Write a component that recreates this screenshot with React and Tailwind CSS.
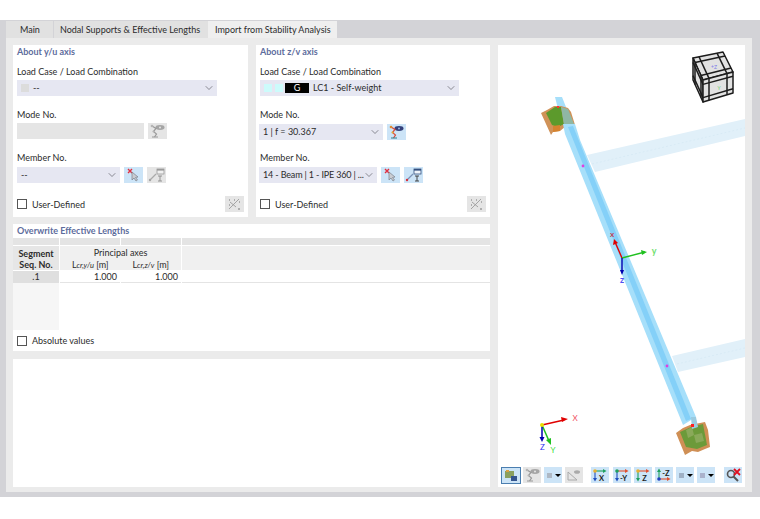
import { ChevronDown } from "lucide-react";

const font = { fontFamily: 'Lato, "Noto Sans", sans-serif' };

function Select({ className, children }) {
  return (
    <div className={`h-4 bg-[#e6e7f2] flex items-center justify-between pl-[4px] pr-[2px] text-[#2b2b2b] ${className}`}>
      <div className="flex items-center min-w-0 whitespace-nowrap">{children}</div>
      <ChevronDown size={12} strokeWidth={1.3} className="text-[#55555f] shrink-0" />
    </div>
  );
}

function IconButton({ active, className = "", children }) {
  return (
    <div className={`w-[19px] h-4 flex items-center justify-center shrink-0 ${active ? "bg-[#cce4f7]" : "bg-[#e5e5e5]"} ${className}`}>
      <svg width="17" height="14" viewBox="0 0 17 14" fill="none">
        {children}
      </svg>
    </div>
  );
}

function ModeIcon({ on }) {
  return (
    <>
      <ellipse cx="11" cy="3.500" rx="4.500" ry="2.400" fill={on ? "#34407a" : "#a5a5a5"} />
      <circle cx="11" cy="3.500" r="1" fill={on ? "#9db4e0" : "#e5e5e5"} />
      <path d="M3 2 L7 4.500 L4.500 7.500 L7.500 10 L5.500 13" stroke={on ? "#d84a3a" : "#9a9a9a"} strokeWidth="1.2" />
      <circle cx="3" cy="2" r="1.300" fill={on ? "#e08a30" : "#b5b5b5"} />
      <circle cx="4.500" cy="7.500" r="1" fill={on ? "#e0b030" : "#b5b5b5"} />
      <path d="M3 13 H9" stroke={on ? "#2c7f8f" : "#999"} strokeWidth="1" />
    </>
  );
}

function PickIcon() {
  return (
    <>
      <path d="M3 1 L7 5 M7 1 L3 5" stroke="#e03040" strokeWidth="1.4" />
      <path d="M7 4 L7 12 L9 10 L11 13 L12.500 12 L10.500 9.500 L13 9 Z" fill="#c9ccd2" stroke="#7b7f88" strokeWidth="0.7" />
    </>
  );
}

function SectionIcon({ on }) {
  const c = on ? "#33507f" : "#9a9a9a";
  return (
    <>
      <rect x="9" y="1" width="7" height="5" fill={on ? "#eef4fb" : "#f0f0f0"} stroke={c} strokeWidth="0.8" />
      <rect x="9" y="1" width="7" height="1.600" fill={c} />
      <path d="M2 12 L8 6" stroke={on ? "#7b93b8" : "#aaa"} strokeWidth="1.2" />
      <circle cx="2" cy="12" r="1.200" fill={on ? "#d8303a" : "#a5a5a5"} />
      <path d="M10 8 H14 M12 8 V13 M10 13 H14" stroke={on ? "#333" : "#8b8b8b"} strokeWidth="0.9" />
    </>
  );
}

function ScatterIcon() {
  return (
    <>
      <path d="M3 12 L13 2 M4 5 L10 10" stroke="#9c9c9c" strokeWidth="0.9" />
      <path d="M3 3 H4 M8 3 H9 M13 5 H14 M3 8 H4 M12 12 H14" stroke="#777" strokeWidth="1" />
    </>
  );
}

function Check({ label }) {
  return (
    <div className="flex items-center gap-[5px] text-[#2b2b2b]">
      <div className="w-[10px] h-[10px] bg-white border border-[#555]" />
      <span className="leading-[13px]">{label}</span>
    </div>
  );
}

function Label({ className, children }) {
  return <div className={`leading-3 text-[#2b2b2b] ${className}`}>{children}</div>;
}

function Title({ children }) {
  return <div className="leading-[13px] font-bold text-[#5d6c9c]">{children}</div>;
}

function ToolButton({ active, children }) {
  return (
    <div className={`w-[18px] h-4 flex items-center justify-center shrink-0 ${active ? "bg-[#cce4f7]" : "bg-[#e5e5e5]"}`}>
      <svg width="16" height="14" viewBox="0 0 16 14" fill="none">
        {children}
      </svg>
    </div>
  );
}

function ToolDrop({ swatch }) {
  return (
    <div className="w-[18px] h-4 bg-[#cce4f7] flex items-center gap-[3px] pl-[3px] shrink-0">
      <span className={`w-[5px] h-[5px] ${swatch}`} />
      <span className="w-0 h-0 border-x-[3px] border-x-transparent border-t-[3px] border-t-black" />
    </div>
  );
}

// view direction glyph: dot at the origin, one arrow across and one arrow down
function AxisGlyph({ letter, dot, across, down }) {
  return (
    <>
      <path d="M3 3 V11" stroke={down} strokeWidth="1.1" />
      <path d="M3 3 H12" stroke={across} strokeWidth="1.1" />
      <path d="M1 10 L3 13.500 L5 10 Z" fill={down} />
      <path d="M11 1 L14.500 3 L11 5 Z" fill={across} />
      <circle cx="3" cy="3" r="1.800" fill={dot} />
      <text x="9.500" y="12.500" fontSize="7.5" fontWeight="700" fill="#222" textAnchor="middle">{letter}</text>
    </>
  );
}

function AxisGlyphUp() {
  return (
    <>
      <path d="M3 11 V3" stroke="#20a060" strokeWidth="1.1" />
      <path d="M3 11 H12" stroke="#e05030" strokeWidth="1.1" />
      <path d="M1 4 L3 0.500 L5 4 Z" fill="#20a060" />
      <path d="M11 9 L14.500 11 L11 13 Z" fill="#e05030" />
      <circle cx="3" cy="11" r="1.800" fill="#2040c0" />
      <text x="10" y="7.500" fontSize="7.5" fontWeight="700" fill="#222" textAnchor="middle">-Z</text>
    </>
  );
}

// a grid of cube lines on one face, u and v run along the two face edges
function CubeFace({ p }) {
  const at = (u, v) => {
    const x0 = p[0][0] + (p[1][0] - p[0][0]) * u;
    const y0 = p[0][1] + (p[1][1] - p[0][1]) * u;
    const x1 = p[3][0] + (p[2][0] - p[3][0]) * u;
    const y1 = p[3][1] + (p[2][1] - p[3][1]) * u;
    return `${x0 + (x1 - x0) * v},${y0 + (y1 - y0) * v}`;
  };
  const cuts = [0.2, 0.8];
  return (
    <g stroke="#1c1c1c" strokeWidth="1.500">
      <polygon points={p.map((q) => q.join(",")).join(" ")} fill="#e2e2e2" strokeLinejoin="round" />
      {cuts.map((c) => (
        <g key={c}>
          <polyline points={`${at(c, 0)} ${at(c, 1)}`} />
          <polyline points={`${at(0, c)} ${at(1, c)}`} />
        </g>
      ))}
    </g>
  );
}

function Viewport() {
  return (
    <svg className="w-[247px] h-[419px] block" viewBox="498 45 247 419">
      <polygon points="587,155 745,119 745,136 595,172" fill="#e1f0f9" />
      <polygon points="672,356 745,339 745,357 678,372" fill="#e1f0f9" />
      <path d="M592 164 L745 128 M677 364 L745 348" stroke="#cfe4f0" strokeWidth="0.5" strokeDasharray="2 2" />

      {/* top end plate */}
      <polygon points="555,97 562,97 572,122 562,125" fill="#a6dffa" />
      <path d="M541 113 L547 110 L554 106 L561 106 L568 108 L571 112 L575 125 L566 126 L560 131 L553 132 L551 135 Z" fill="#d09258" />
      <path d="M546 113 L555 107 L561 107 L564 124 L558 127 L552 125 Z" fill="#5c9a2c" />
      <path d="M561 107 L568 109 L574 124 L564 125 Z" fill="#8fb7a4" />
      <path d="M553 126 L560 125 L560 131 L553 132 Z" fill="#d5832f" />

      {/* main beam */}
      <polygon points="565,134 563,124 575,124 580,140 696,417 683,425" fill="#a6dffa" />
      <polygon points="568,127 573,126 691,419 686,421" fill="#84d0f8" />

      {/* bottom end plate */}
      <path d="M676 433 L683 428 L690 425 L705 422 L708 430 L710 447 L705 449 L698 452 L692 451 L685 455 Z" fill="#cf8f55" />
      <path d="M680 432 L691 427 L703 424 L707 445 L697 449 L686 447 Z" fill="#6c9a3a" />
      <path d="M686 430 L692 427 L694 435 L688 438 Z M694 435 L702 433 L704 441 L696 443 Z" fill="#8aa95a" />
      <path d="M691 417 L696 417 L698 427 L692 429 Z" fill="#9bcbe0" />
      <rect x="557" y="106" width="2" height="2" fill="#ff3030" />
      <rect x="691" y="424" width="3" height="3" fill="#ff2020" />
      <circle cx="583" cy="166" r="1.400" fill="#e040e0" />
      <circle cx="667" cy="366" r="1.400" fill="#e040e0" />

      <g strokeWidth="1.400" fill="none">
        <path d="M622 258 L615 242" stroke="#e00000" />
        <path d="M622 258 L645 252" stroke="#20c020" />
        <path d="M622 258 V272" stroke="#0000b0" />
      </g>
      <polygon points="614,239 613,245 618,243" fill="#e00000" />
      <polygon points="647,252 641,250 642,255" fill="#20c020" />
      <polygon points="622,275 620,270 624,270" fill="#0000b0" />
      <text x="612" y="237" fontSize="8" fill="#c04050" textAnchor="middle" fontWeight="700">x</text>
      <text x="654" y="254" fontSize="9" fill="#70e070" textAnchor="middle" fontWeight="700">y</text>
      <text x="622" y="283" fontSize="9" fill="#5050f0" textAnchor="middle" fontWeight="700">z</text>

      <g strokeWidth="1.500" fill="none">
        <path d="M542 425 L564 420" stroke="#e00000" />
        <path d="M542 425 L549 441" stroke="#20c020" />
        <path d="M542 425 V438" stroke="#0000b0" />
      </g>
      <polygon points="568,419 561,417 562,422" fill="#e00000" />
      <polygon points="551,445 546,440 551,438" fill="#20c020" />
      <polygon points="542,442 539.500,437 544.500,437" fill="#0000b0" />
      <circle cx="542" cy="425" r="2" fill="#e8e000" />
      <text x="575" y="421" fontSize="8" fill="#f05060" textAnchor="middle">X</text>
      <text x="542.500" y="450" fontSize="8" fill="#3030f0" textAnchor="middle">Z</text>
      <text x="553" y="453" fontSize="8" fill="#40e040" textAnchor="middle">Y</text>

      <CubeFace p={[[693, 58], [723, 52], [733, 72], [703, 80]]} />
      <CubeFace p={[[693, 58], [703, 80], [703, 102], [693, 80]]} />
      <CubeFace p={[[703, 80], [733, 72], [733, 93], [703, 102]]} />
      <text x="714" y="69" fontSize="5" fill="#7b7be8" textAnchor="middle">+Z</text>
      <text x="719" y="90" fontSize="5" fill="#70d070" textAnchor="middle">Y</text>
    </svg>
  );
}

export default function App() {
  return (
    <div className="w-[760px] h-[519px] bg-white pt-[20px] text-[9px]" style={font}>
      <div className="h-[477px] bg-[#d3d3d7] pl-[6px] pr-[8px] pb-[5px] flex flex-col">
        <div className="h-[18px] flex shrink-0 pt-[1px] whitespace-nowrap">
          <div className="w-[47px] bg-[#e1e1e1] pl-[14px] leading-[17px] text-[#2b2b2b]">Main</div>
          <div className="w-[154px] ml-[1px] bg-[#e1e1e1] pl-[6px] leading-[17px] text-[#2b2b2b]">Nodal Supports &amp; Effective Lengths</div>
          <div className="w-[129px] bg-[#efefef] pl-[7px] leading-[17px] text-[#2b2b2b]">Import from Stability Analysis</div>
        </div>
        <div className="flex-1 bg-[#ebebeb] pl-[7px] pt-[7px] flex gap-[8px]">
          <div className="w-[477px] flex flex-col">
            <div className="flex gap-[8px]">
              <div className="w-[235px] h-[172px] bg-white pl-[4px]">
                <Title>About y/u axis</Title>
                <Label className="mt-[8px]">Load Case / Load Combination</Label>
                <Select className="w-[200px] mt-[2px]">
                  <span className="w-2 h-2 bg-[#dcdcdc] mr-[4px]" />
                  <span>--</span>
                </Select>
                <Label className="mt-[13px]">Mode No.</Label>
                <div className="flex gap-[4px] mt-[2px]">
                  <div className="w-[127px] h-4 bg-[#e5e5e5]" />
                  <IconButton><ModeIcon /></IconButton>
                </div>
                <Label className="mt-[13px]">Member No.</Label>
                <div className="flex gap-[4px] mt-[3px]">
                  <Select className="w-[103px]"><span>--</span></Select>
                  <IconButton active><PickIcon /></IconButton>
                  <IconButton><SectionIcon /></IconButton>
                </div>
                <div className="flex items-center justify-between mt-[13px] pr-[4px]">
                  <Check label="User-Defined" />
                  <IconButton><ScatterIcon /></IconButton>
                </div>
              </div>
              <div className="w-[234px] h-[172px] bg-white pl-[3px]">
                <div className="pl-[1px]"><Title>About z/v axis</Title></div>
                <Label className="mt-[8px] pl-[1px]">Load Case / Load Combination</Label>
                <Select className="w-[199px] mt-[2px] ml-[1px]">
                  <span className="w-2 h-2 bg-[#ccfbfb]" />
                  <span className="w-2 h-2 bg-[#ccfbfb] ml-[3px]" />
                  <span className="w-[24px] h-[10px] bg-black text-white text-center leading-[10px] ml-[2px] mr-[4px]">G</span>
                  <span>LC1 - Self-weight</span>
                </Select>
                <Label className="mt-[13px] pl-[1px]">Mode No.</Label>
                <div className="flex gap-[4px] mt-[3px]">
                  <Select className="w-[124px]"><span>1 | f = 30.367</span></Select>
                  <IconButton active><ModeIcon on /></IconButton>
                </div>
                <Label className="mt-[12px] pl-[1px]">Member No.</Label>
                <div className="flex gap-[4px] mt-[3px]">
                  <Select className="w-[118px]"><span className="tracking-[-0.15px]">14 - Beam | 1 - IPE 360 | ...</span></Select>
                  <IconButton active><PickIcon /></IconButton>
                  <IconButton active><SectionIcon on /></IconButton>
                </div>
                <div className="flex items-center justify-between mt-[13px] pl-[1px] pr-[4px]">
                  <Check label="User-Defined" />
                  <IconButton><ScatterIcon /></IconButton>
                </div>
              </div>
            </div>

            <div className="h-[127px] mt-[7px] bg-white flex flex-col">
              <div className="leading-[14px] font-bold text-[#5d6c9c] pl-[4px]">Overwrite Effective Lengths</div>
              <div className="grid grid-cols-[46px_60px_60px_1fr] gap-x-[1px] text-[#2b2b2b]">
                <div className="h-[7px] bg-[#e4e4e4]" />
                <div className="h-[7px] bg-[#e4e4e4]" />
                <div className="h-[7px] bg-[#e4e4e4]" />
                <div className="h-[7px] bg-[#e4e4e4]" />
                <div className="h-[24px] bg-[#e6e6e6] text-center leading-[11px] pt-[2px] font-bold mt-[1px]">Segment<br />Seq. No.</div>
                <div className="col-span-2 h-[24px] bg-[#f0f0f0] text-center mt-[1px]">
                  <div className="leading-[13px]">Principal axes</div>
                  <div className="grid grid-cols-2 leading-[11px]">
                    <span>L<span className="italic text-[7.5px]">cr,y/u</span> [m]</span>
                    <span>L<span className="italic text-[7.5px]">cr,z/v</span> [m]</span>
                  </div>
                </div>
                <div className="h-[24px] bg-[#f0f0f0] mt-[1px]" />
                <div className="h-[12px] bg-[#dfdfdf] text-center leading-[12px] mt-[1px]">.1</div>
                <div className="h-[12px] border-b border-[#e4e4e4] text-right pr-[3px] leading-[12px] mt-[1px]">1.000</div>
                <div className="h-[12px] border-b border-[#e4e4e4] text-right pr-[3px] leading-[12px] mt-[1px]">1.000</div>
                <div className="h-[12px] border-b border-[#e4e4e4] mt-[1px]" />
                <div className="h-[47px] bg-[#f6f6f6]" />
              </div>
              <div className="mt-[4px] pl-[4px]">
                <Check label="Absolute values" />
              </div>
            </div>

            <div className="h-[128px] mt-[8px] bg-white" />
          </div>

          <div className="w-[247px] h-[442px] bg-white">
            <Viewport />
            <div className="flex items-start h-[23px] pl-[3px] pt-[3px]">
              <div className="w-[20px] h-[17px] bg-[#cce4f7] border border-[#4a7eb0] flex items-center justify-center shrink-0">
                <svg width="15" height="13" viewBox="0 0 15 13">
                  <rect x="1" y="2" width="9" height="7" fill="#8aa060" />
                  <rect x="2" y="1" width="3" height="2" fill="#d9a040" />
                  <rect x="7" y="7" width="6" height="5" fill="#34558f" />
                </svg>
              </div>
              <div className="ml-[2px]">
                <ToolButton><ModeIcon /></ToolButton>
              </div>
              <div className="ml-[3px]"><ToolDrop swatch="bg-[#aeb8c4]" /></div>
              <div className="ml-[3px]">
                <ToolButton>
                  <path d="M2 12 L2 4 L11 12 Z" stroke="#aaa" fill="none" />
                  <ellipse cx="11" cy="4" rx="3" ry="1.800" fill="#aaa" />
                </ToolButton>
              </div>
              <div className="ml-[8px]"><ToolButton active><AxisGlyph letter="X" dot="#e8b030" across="#20a060" down="#2050c0" /></ToolButton></div>
              <div className="ml-[4px]"><ToolButton active><AxisGlyph letter="-Y" dot="#20a060" across="#e05030" down="#2050c0" /></ToolButton></div>
              <div className="ml-[3px]"><ToolButton active><AxisGlyph letter="Z" dot="#e8b030" across="#e05030" down="#20a060" /></ToolButton></div>
              <div className="ml-[3px]"><ToolButton active><AxisGlyphUp /></ToolButton></div>
              <div className="ml-[3px]"><ToolDrop swatch="bg-[#9fb0c4]" /></div>
              <div className="ml-[3px]"><ToolDrop swatch="bg-[#aab2cc]" /></div>
              <div className="ml-[9px]">
                <ToolButton active>
                  <circle cx="6" cy="6" r="3.500" stroke="#555" strokeWidth="1.600" fill="none" />
                  <path d="M8.500 8.500 L13 13" stroke="#555" strokeWidth="2" />
                  <path d="M9 1 L15 7 M15 1 L9 7" stroke="#e01020" strokeWidth="1.800" />
                </ToolButton>
              </div>
            </div>
          </div>
        </div>
      </div>
    </div>
  );
}
